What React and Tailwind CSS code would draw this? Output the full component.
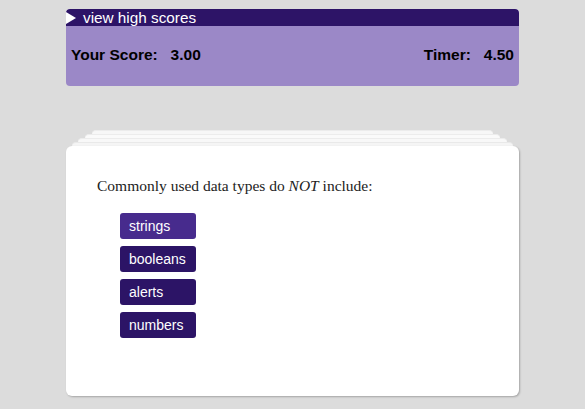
export default function App() {
  const answers = ['strings', 'booleans', 'alerts', 'numbers'];

  return (
    <div className="min-h-[409px] bg-[#dcdcdc] pt-[9px] font-['Liberation_Sans',Arial,sans-serif]">
      <div className="mx-auto w-[453px] rounded-[4px] bg-[#9b88c7] overflow-hidden">
        <div className="flex h-[17px] items-center bg-[#2d1467] text-white rounded-t-[4px]">
          <svg width="10" height="12" viewBox="0 0 10 12">
            <path d="M0 0 L10 6 L0 12 Z" fill="#fff" />
          </svg>
          <span className="ml-[7px] text-[15.3px] leading-none">view high scores</span>
        </div>
        <div className="flex h-[60px] items-center justify-between px-[5px] pb-[2px] text-[15.5px] font-bold text-black">
          <span className="whitespace-pre">Your Score:   3.00</span>
          <span className="whitespace-pre">Timer:   4.50</span>
        </div>
      </div>

      {/* stacked question cards */}
      <div className="mx-auto mt-[44px] w-[453px]">
        <div className="mx-[26px] h-[4px] rounded-t-[6px] border-t border-[#ececec] bg-[#f7f7f7]" />
        <div className="mx-[19px] h-[4px] rounded-t-[6px] border-t border-[#ececec] bg-[#fafafa]" />
        <div className="mx-[12px] h-[4px] rounded-t-[6px] border-t border-[#ececec] bg-[#f8f8f8]" />
        <div className="mx-[6px] h-[4px] rounded-t-[6px] border-t border-[#e9e9e9] bg-[#f5f5f5]" />
        <div className="h-[250px] rounded-[6px] bg-white shadow-[1px_1px_2px_rgba(0,0,0,0.25)] pt-[30px] pl-[31px]">
          <p className="font-['Liberation_Serif','Times_New_Roman',serif] text-[15.5px] leading-[20px] text-[#222]">
            Commonly used data types do <i>NOT</i> include:
          </p>
          <div className="mt-[17px] ml-[23px] flex flex-col gap-[7px]">
            {answers.map((a, i) => (
              <button
                key={a}
                className={`h-[26px] w-[76px] rounded-[3px] pl-[9px] text-left text-[14px] text-white ${i === 0 ? 'bg-[#472b8d]' : 'bg-[#2c1466]'}`}
              >
                {a}
              </button>
            ))}
          </div>
        </div>
      </div>
    </div>
  );
}
